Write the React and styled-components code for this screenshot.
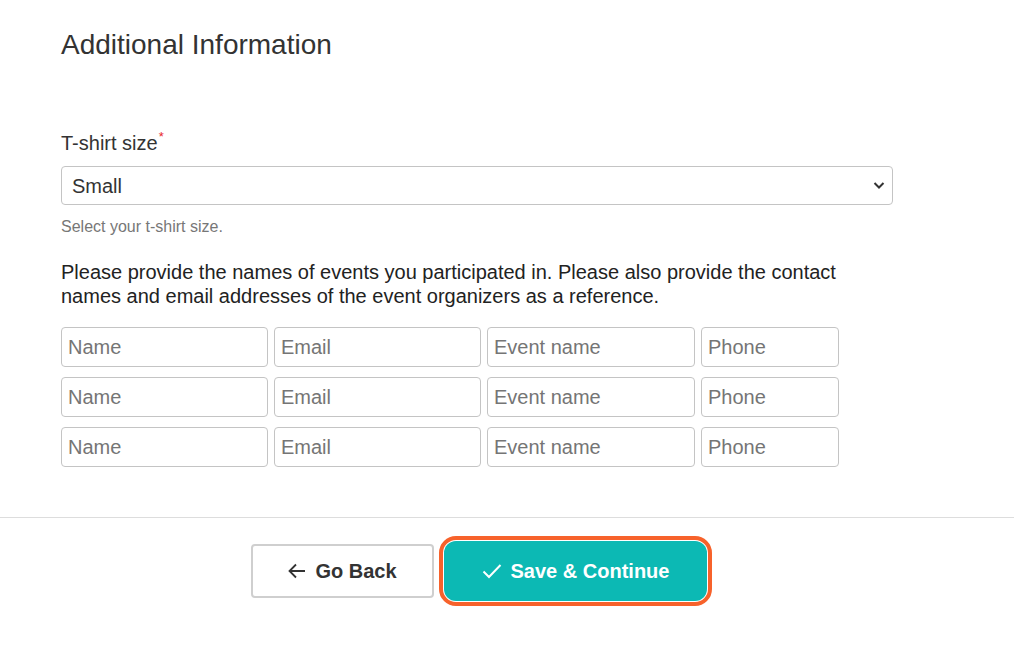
import React from "react";
import styled, { createGlobalStyle } from "styled-components";

const GlobalStyle = createGlobalStyle`
  html, body {
    margin: 0;
    padding: 0;
    background: #fff;
    font-family: "Liberation Sans", Arial, sans-serif;
    color: #333;
  }
  * { box-sizing: border-box; }
`;

const Page = styled.div`
  width: 1014px;
  min-height: 647px;
  background: #fff;
`;

const Content = styled.div`
  width: 832px;
  margin-left: 61px;
  padding-top: 30px;
`;

const Title = styled.h2`
  margin: 0;
  font-size: 28px;
  line-height: 30px;
  font-weight: 400;
  color: #333;
`;

const Label = styled.label`
  display: block;
  margin-top: 71px;
  font-size: 20px;
  line-height: 24px;
  color: #333;

  sup {
    color: #e8262b;
    font-size: 13px;
    line-height: 0;
    vertical-align: 9px;
    margin-left: 1px;
  }
`;

const SelectWrap = styled.div`
  position: relative;
  margin-top: 11px;
`;

const Select = styled.select`
  appearance: none;
  display: block;
  width: 100%;
  height: 39px;
  padding: 0 30px 0 10px;
  font-family: inherit;
  font-size: 20px;
  color: #333;
  background: #fff;
  border: 1px solid #c4c4c4;
  border-radius: 4px;
  outline: none;
`;

const Chevron = styled.svg`
  position: absolute;
  right: 8px;
  top: 15px;
  width: 12px;
  height: 9px;
  pointer-events: none;
`;

const Help = styled.div`
  margin-top: 12px;
  font-size: 16px;
  line-height: 20px;
  color: #777;
`;

const Para = styled.p`
  margin: 23px 0 0;
  max-width: 826px;
  font-size: 20px;
  line-height: 24px;
  color: #222;
`;

const Grid = styled.div`
  margin-top: 19px;
  display: grid;
  grid-template-columns: 207px 207px 208px 138px;
  column-gap: 6px;
  row-gap: 10px;
`;

const Input = styled.input`
  height: 40px;
  width: 100%;
  padding: 0 6px;
  font-family: inherit;
  font-size: 20px;
  color: #333;
  background: #fff;
  border: 1px solid #c4c4c4;
  border-radius: 4px;
  outline: none;

  &::placeholder {
    color: #757575;
  }
`;

const Divider = styled.hr`
  margin: 50px 0 0;
  border: none;
  border-top: 1px solid #ddd;
  width: 1014px;
`;

const Actions = styled.div`
  width: 836px;
  margin-left: 61px;
  margin-top: 23px;
  display: flex;
  justify-content: center;
  align-items: center;
  gap: 10px;
`;

const Button = styled.button`
  display: inline-flex;
  align-items: center;
  justify-content: center;
  gap: 9px;
  height: ${(p) => (p.$primary ? "60px" : "54px")};
  width: ${(p) => (p.$primary ? "263px" : "183px")};
  font-family: inherit;
  font-size: 20px;
  font-weight: 700;
  color: ${(p) => (p.$primary ? "#fff" : "#333")};
  background: ${(p) => (p.$primary ? "#0cb9b4" : "#fff")};
  border: ${(p) => (p.$primary ? "none" : "2px solid #cfcfcf")};
  border-radius: ${(p) => (p.$primary ? "12px" : "4px")};
  outline: ${(p) => (p.$primary ? "4px solid #f7622b" : "none")};
  outline-offset: 1px;
  cursor: pointer;
`;

const rows = [0, 1, 2];

export default function App() {
  return (
    <Page>
      <GlobalStyle />
      <Content>
        <Title>Additional Information</Title>
        <Label>
          T-shirt size<sup>*</sup>
        </Label>
        <SelectWrap>
          <Select defaultValue="small">
            <option value="small">Small</option>
            <option value="medium">Medium</option>
            <option value="large">Large</option>
          </Select>
          <Chevron viewBox="0 0 12 9">
            <path d="M1.5 2 L6 6.5 L10.5 2" fill="none" stroke="#333" strokeWidth="2" />
          </Chevron>
        </SelectWrap>
        <Help>Select your t-shirt size.</Help>
        <Para>
          Please provide the names of events you participated in. Please also provide the contact
          names and email addresses of the event organizers as a reference.
        </Para>
        <Grid>
          {rows.map((r) => (
            <React.Fragment key={r}>
              <Input placeholder="Name" />
              <Input placeholder="Email" />
              <Input placeholder="Event name" />
              <Input placeholder="Phone" />
            </React.Fragment>
          ))}
        </Grid>
      </Content>
      <Divider />
      <Actions>
        <Button>
          <svg width="18" height="16" viewBox="0 0 18 16">
            <path d="M17 8 H2 M8 1.5 L1.5 8 L8 14.5" fill="none" stroke="#333" strokeWidth="1.8" />
          </svg>
          Go Back
        </Button>
        <Button $primary>
          <svg width="20" height="16" viewBox="0 0 20 16">
            <path d="M1.5 8.5 L7 14 L18.5 2" fill="none" stroke="#fff" strokeWidth="2" />
          </svg>
          Save &amp; Continue
        </Button>
      </Actions>
    </Page>
  );
}
